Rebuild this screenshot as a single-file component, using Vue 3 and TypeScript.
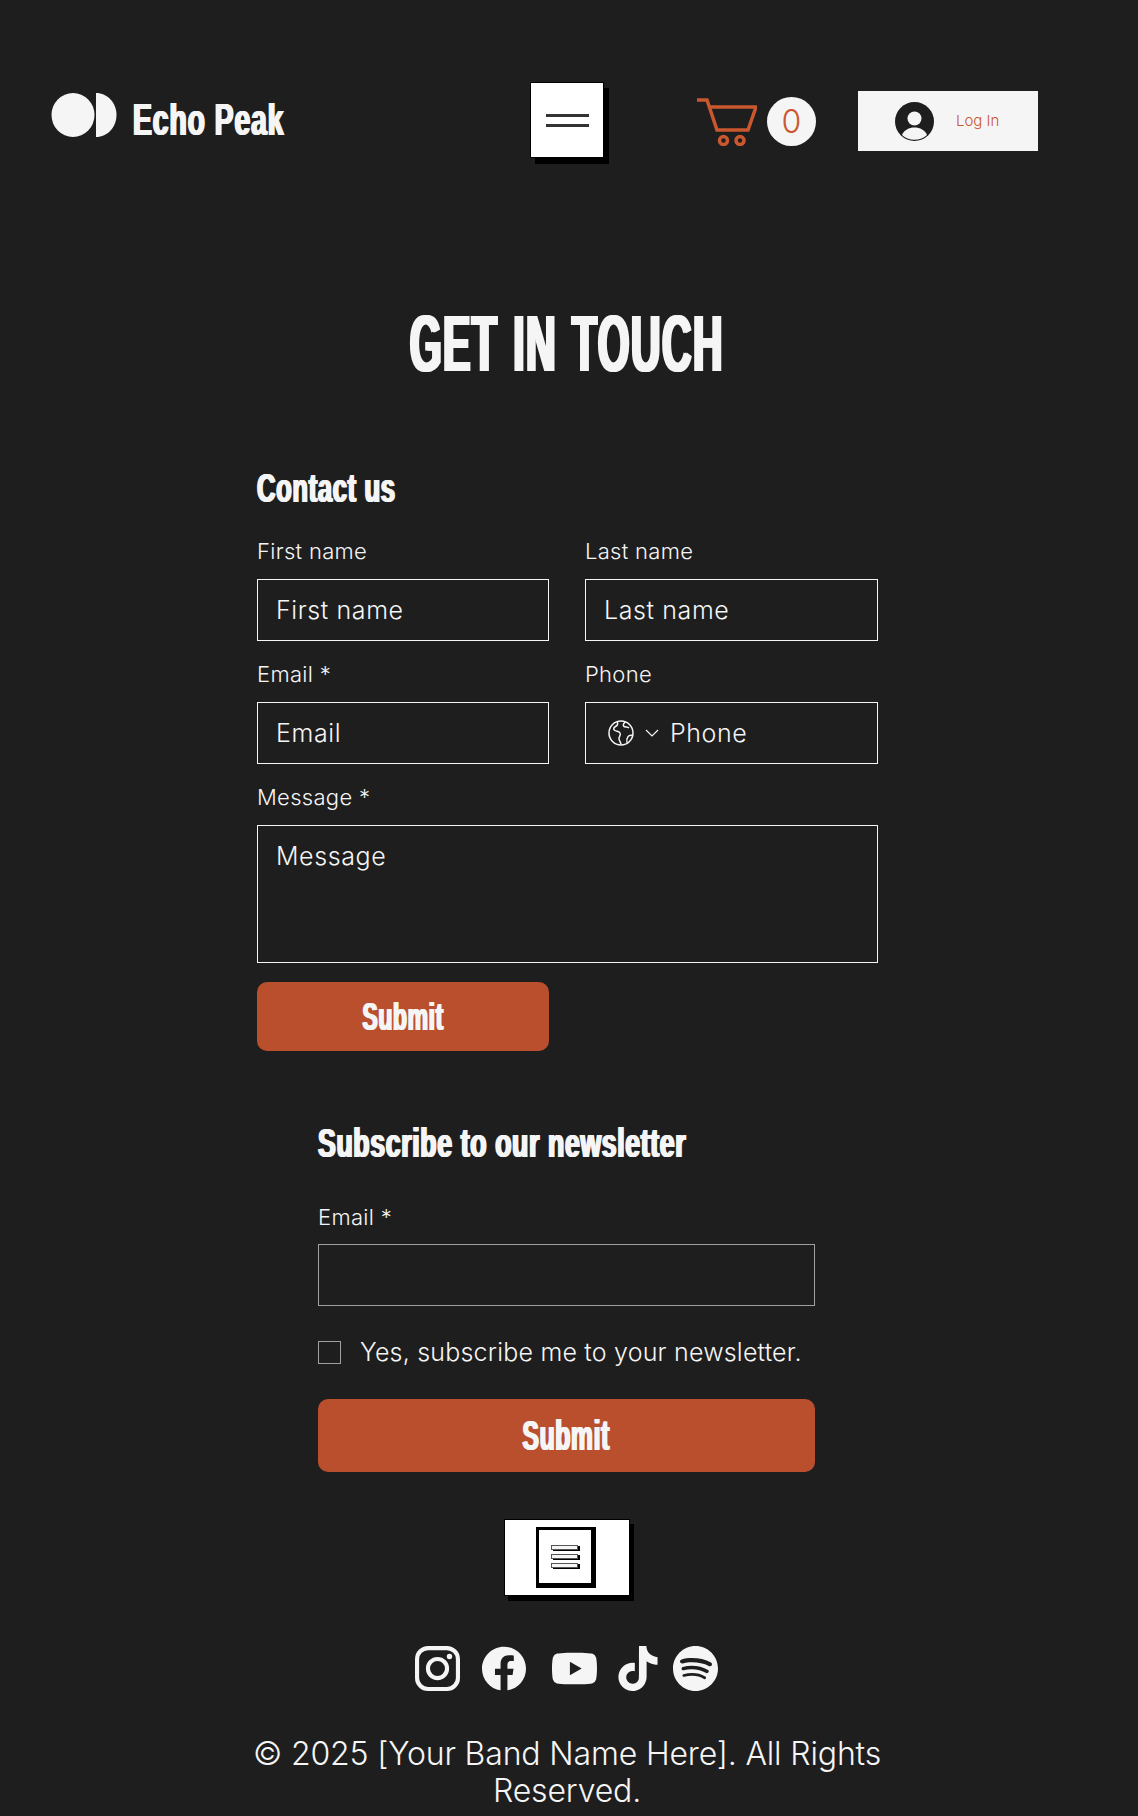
<template>
  <div class="page">
    <header class="site-header">
      <a class="logo" href="#">
        <svg class="logo__mark" viewBox="0 0 66 44" aria-hidden="true">
          <ellipse cx="22" cy="22" rx="21.5" ry="22" fill="#f5f5f5" />
          <path d="M45 0c11.500 0 20.500 9.800 20.500 22S56.500 44 45 44z" fill="#f5f5f5" />
        </svg>
        <span class="logo__name">Echo Peak</span>
      </a>
      <button class="menu-btn" type="button" aria-label="Menu">
        <span></span>
        <span></span>
      </button>
      <div class="cart">
        <svg class="cart__icon" viewBox="0 0 60 48" aria-hidden="true">
          <path d="M0 2h10l10 30h31l8-23H12" fill="none" stroke="#c9572f" stroke-width="3.500" />
          <circle cx="26.500" cy="42.500" r="4" fill="none" stroke="#c9572f" stroke-width="3.500" />
          <circle cx="43" cy="42.500" r="4" fill="none" stroke="#c9572f" stroke-width="3.500" />
        </svg>
        <span class="cart__count">0</span>
      </div>
      <button class="login" type="button">
        <svg class="login__avatar" viewBox="0 0 39 39" aria-hidden="true">
          <circle cx="19.500" cy="19.500" r="19.500" fill="#1e1e1e" />
          <circle cx="19.500" cy="16.500" r="7" fill="#f5f5f5" />
          <path d="M7 33c2-5 7-7.500 12.500-7.500S30 28 32 33c-3 3-7.500 4.700-12.500 4.700S10 36 7 33z" fill="#f5f5f5" />
        </svg>
        <span class="login__text">Log In</span>
      </button>
    </header>

    <h1 class="page-title"><span>GET IN TOUCH</span></h1>

    <form class="contact" @submit.prevent>
      <h2 class="heading heading--contact"><span>Contact us</span></h2>
      <div class="contact__grid">
        <label class="field">
          <span class="field__label">First name</span>
          <input class="field__input" type="text" placeholder="First name" />
        </label>
        <label class="field">
          <span class="field__label">Last name</span>
          <input class="field__input" type="text" placeholder="Last name" />
        </label>
        <label class="field">
          <span class="field__label">Email *</span>
          <input class="field__input" type="email" placeholder="Email" />
        </label>
        <label class="field">
          <span class="field__label">Phone</span>
          <div class="phone">
            <svg class="phone__globe" viewBox="0 0 26 26" aria-hidden="true">
              <circle cx="13" cy="13" r="12" />
              <path d="M9 1.700c1.500 2.300.3 3.800-1.500 4.800s-2.500 2.500-1 3.800 4.500.7 5.500 2.700-.5 3-1 5 1.500 3 2 6.500" />
              <path d="M17.500 1.900c-1.800 1.300-2.800 3-1.800 4.300s4 .5 5.300 1.800" />
              <path d="M24.700 15.500c-2-.5-3.700-.3-4.700 1.200s-1.800 3.300-1 6" />
            </svg>
            <svg class="phone__chevron" viewBox="0 0 14 8" aria-hidden="true">
              <path d="M1 1l6 6 6-6" />
            </svg>
            <input class="phone__input" type="tel" placeholder="Phone" />
          </div>
        </label>
        <label class="field field--wide">
          <span class="field__label">Message *</span>
          <textarea class="field__input field__input--area" placeholder="Message"></textarea>
        </label>
      </div>
      <button class="submit submit--contact" type="submit"><span>Submit</span></button>
    </form>

    <form class="newsletter" @submit.prevent>
      <h2 class="heading heading--newsletter"><span>Subscribe to our newsletter</span></h2>
      <label class="field newsletter__field">
        <span class="field__label">Email *</span>
        <input class="field__input field__input--muted" type="email" />
      </label>
      <label class="consent">
        <input class="consent__box" type="checkbox" />
        <span>Yes, subscribe me to your newsletter.</span>
      </label>
      <button class="submit submit--newsletter" type="submit"><span>Submit</span></button>
    </form>

    <footer class="site-footer">
      <button class="doc-btn" type="button" aria-label="Menu">
        <span class="doc-btn__icon">
          <i></i>
          <i></i>
          <i></i>
        </span>
      </button>
      <div class="socials">
        <a v-for="icon in socialIcons" :key="icon.name" href="#" :aria-label="icon.name" :class="`social social--${icon.name}`">
          <svg :viewBox="icon.viewBox ?? '0 0 24 24'"><path :d="icon.path" /></svg>
        </a>
      </div>
      <p class="copyright">© 2025 [Your Band Name Here]. All Rights Reserved.</p>
    </footer>
  </div>
</template>

<script setup lang="ts">
const socialIcons: { name: string; path: string; viewBox?: string }[] = [
  {
    name: 'instagram',
    path: 'M7 0h10a7 7 0 0 1 7 7v10a7 7 0 0 1-7 7H7a7 7 0 0 1-7-7V7a7 7 0 0 1 7-7zm0 2.200A4.800 4.800 0 0 0 2.200 7v10A4.800 4.800 0 0 0 7 21.800h10a4.800 4.800 0 0 0 4.800-4.800V7A4.800 4.800 0 0 0 17 2.200zM12 5.800a6.200 6.200 0 1 1 0 12.400 6.200 6.200 0 0 1 0-12.400zM12 8a4 4 0 1 0 0 8 4 4 0 0 0 0-8zm6.400-3.900a1.450 1.450 0 1 1 0 2.900 1.450 1.450 0 0 1 0-2.900z',
  },
  {
    name: 'facebook',
    path: 'M24 12.073c0-6.627-5.373-12-12-12s-12 5.373-12 12c0 5.990 4.388 10.954 10.125 11.854v-8.385H7.078v-3.470h3.047V9.430c0-3.007 1.792-4.669 4.533-4.669 1.312 0 2.686.235 2.686.235v2.953H15.830c-1.491 0-1.956.925-1.956 1.874v2.250h3.328l-.532 3.470h-2.796v8.385C19.612 23.027 24 18.062 24 12.073z',
  },
  {
    name: 'youtube',
    path: 'M23.498 6.186a3.016 3.016 0 0 0-2.122-2.136C19.505 3.545 12 3.545 12 3.545s-7.505 0-9.377.505A3.017 3.017 0 0 0 .502 6.186C0 8.070 0 12 0 12s0 3.930.502 5.814a3.016 3.016 0 0 0 2.122 2.136c1.871.505 9.376.505 9.376.505s7.505 0 9.377-.505a3.015 3.015 0 0 0 2.122-2.136C24 15.930 24 12 24 12s0-3.930-.502-5.814zM9.545 15.568V8.432L15.818 12l-6.273 3.568z',
  },
  {
    name: 'tiktok',
    viewBox: '1.600 0 20.800 24',
    path: 'M12.525.020c1.310-.020 2.610-.010 3.910-.020.080 1.530.630 3.090 1.750 4.170 1.120 1.110 2.700 1.620 4.240 1.790v4.030c-1.440-.050-2.890-.350-4.200-.970-.570-.260-1.100-.590-1.620-.930-.010 2.920.010 5.840-.020 8.750-.080 1.400-.540 2.790-1.350 3.940-1.310 1.920-3.580 3.170-5.910 3.210-1.430.080-2.860-.310-4.080-1.030-2.020-1.190-3.440-3.370-3.650-5.710-.020-.500-.030-1-.010-1.490.180-1.900 1.120-3.720 2.580-4.960 1.660-1.440 3.980-2.130 6.150-1.720.020 1.480-.040 2.960-.040 4.440-.990-.320-2.150-.230-3.020.370-.630.410-1.110 1.040-1.360 1.750-.210.510-.150 1.070-.140 1.610.240 1.640 1.820 3.020 3.500 2.870 1.120-.010 2.190-.660 2.770-1.610.190-.330.400-.670.410-1.060.100-1.790.060-3.570.070-5.360.010-4.030-.010-8.050.020-12.070z',
  },
  {
    name: 'spotify',
    path: 'M12 0C5.400 0 0 5.400 0 12s5.400 12 12 12 12-5.400 12-12S18.660 0 12 0zm5.521 17.340c-.240.359-.660.480-1.021.240-2.820-1.740-6.360-2.101-10.561-1.141-.418.122-.779-.179-.899-.539-.120-.421.180-.780.540-.900 4.560-1.021 8.520-.600 11.640 1.320.420.180.479.659.301 1.020zm1.440-3.300c-.301.420-.841.600-1.262.300-3.239-1.980-8.159-2.580-11.939-1.380-.479.120-1.020-.120-1.140-.600-.120-.480.120-1.021.600-1.141C9.600 9.900 15 10.561 18.720 12.840c.361.181.540.780.241 1.200zm.120-3.360C15.240 8.400 8.820 8.160 5.160 9.301c-.600.179-1.200-.181-1.380-.721-.180-.601.180-1.200.720-1.381 4.260-1.260 11.280-1.020 15.721 1.621.539.300.719 1.020.419 1.560-.299.421-1.020.599-1.559.300z',
  },
]
</script>

<style>
html,
body {
  margin: 0;
  background: #1e1e1e;
}
</style>

<style scoped>
.page {
  width: 1138px;
  height: 1816px;
  overflow: hidden;
  background: #1e1e1e;
  color: #f5f5f5;
  font-family: Inter, 'Open Sans', sans-serif;
  font-weight: 300;
}

.site-header {
  display: flex;
  align-items: center;
  padding: 82px 0 0 51px;
}

.logo {
  display: flex;
  align-items: center;
  width: 479px;
  color: #f5f5f5;
  text-decoration: none;
}

.logo__mark {
  width: 66px;
  height: 44px;
  margin-top: -11px;
}

.logo__name {
  margin-left: 16px;
  font-family: 'Liberation Sans', sans-serif;
  font-size: 45px;
  font-weight: 700;
  line-height: 50px;
  letter-spacing: 1.500px;
  text-shadow: 1.500px 0 #f5f5f5, -1.500px 0 #f5f5f5;
  transform: scaleX(0.628);
  transform-origin: left center;
  white-space: nowrap;
}

.menu-btn {
  display: flex;
  flex-direction: column;
  align-items: center;
  justify-content: center;
  gap: 7px;
  width: 74px;
  height: 76px;
  padding: 0;
  border: 1px solid #000;
  background: #fff;
  box-shadow: 5px 6px 0 #000;
}

.menu-btn span {
  width: 43px;
  height: 3px;
  background: #333;
}

.cart {
  display: flex;
  align-items: center;
  gap: 10px;
  margin-left: 93px;
  margin-top: 3px;
}

.cart__icon {
  width: 60px;
  height: 48px;
}

.cart__count {
  display: flex;
  align-items: center;
  justify-content: center;
  width: 49px;
  height: 49px;
  border-radius: 50%;
  background: #f5f5f5;
  color: #c9572f;
  font-size: 32px;
  font-weight: 300;
}

.login {
  display: flex;
  align-items: center;
  gap: 22px;
  width: 180px;
  height: 60px;
  margin-left: 42px;
  margin-top: 2px;
  padding: 0 0 0 37px;
  border: 0;
  background: #f5f5f5;
  color: #c9572f;
  font-family: inherit;
  font-size: 15px;
  font-weight: 300;
}

.login__avatar {
  width: 39px;
  height: 39px;
}

.login__text {
  padding-bottom: 2px;
}

.page-title {
  width: 1134px;
  height: 90px;
  margin: 141px 0 0;
  text-align: center;
  font-family: 'Liberation Sans', sans-serif;
  font-size: 80px;
  font-weight: 700;
  line-height: 90px;
  letter-spacing: 3px;
  word-spacing: 4px;
  color: #f5f5f5;
  text-shadow: 3px 0 #f5f5f5, -3px 0 #f5f5f5;
}

.page-title span {
  display: inline-block;
  transform: scaleX(0.51);
  white-space: nowrap;
}

.heading {
  height: 40px;
  margin: 0;
  font-family: 'Liberation Sans', sans-serif;
  font-size: 40px;
  font-weight: 700;
  line-height: 40px;
  letter-spacing: 1px;
  text-shadow: 1.500px 0 #f5f5f5, -1.500px 0 #f5f5f5;
}

.heading span {
  display: inline-block;
  transform-origin: left center;
  white-space: nowrap;
}

.heading--contact span {
  transform: scaleX(0.64);
}

.heading--newsletter span {
  transform: scaleX(0.665);
}

.contact {
  width: 621px;
  margin: 79px 0 0 257px;
}

.contact__grid {
  display: grid;
  grid-template-columns: 292px 293px;
  column-gap: 36px;
  row-gap: 22px;
  margin-top: 32px;
}

.contact__grid .field__label {
  padding-bottom: 2px;
  line-height: 22px;
}

.field {
  display: flex;
  flex-direction: column;
  gap: 15px;
}

.field--wide {
  grid-column: 1 / -1;
}

.field__label {
  font-size: 22px;
  line-height: 24px;
  letter-spacing: 0.3px;
}

.field__input {
  box-sizing: border-box;
  width: 100%;
  height: 62px;
  padding: 0 18px;
  border: 1px solid #f5f5f5;
  border-radius: 0;
  outline: 0;
  background: transparent;
  color: #f5f5f5;
  font-family: inherit;
  font-size: 25px;
  font-weight: 300;
  letter-spacing: 0.6px;
}

.field__input--area {
  display: block;
  height: 138px;
  padding-top: 15px;
  resize: none;
}

.field__input--muted {
  border-color: #a0a0a0;
}

.field__input::placeholder,
.phone__input::placeholder {
  color: #f5f5f5;
  opacity: 1;
}

.phone {
  display: flex;
  align-items: center;
  box-sizing: border-box;
  height: 62px;
  padding-left: 22px;
  border: 1px solid #f5f5f5;
}

.phone__globe {
  flex: none;
  width: 26px;
  height: 26px;
  fill: none;
  stroke: #f5f5f5;
  stroke-width: 1.500;
}

.phone__chevron {
  flex: none;
  width: 14px;
  height: 8px;
  margin-left: 11px;
  fill: none;
  stroke: #f5f5f5;
  stroke-width: 1.200;
}

.phone__input {
  flex: 1;
  min-width: 0;
  margin-left: 11px;
  padding: 0;
  border: 0;
  outline: 0;
  background: transparent;
  color: #f5f5f5;
  font-family: inherit;
  font-size: 25px;
  font-weight: 300;
  letter-spacing: 0.6px;
}

.submit {
  display: flex;
  align-items: center;
  justify-content: center;
  border: 0;
  background: #b94f2c;
  color: #f5f5f5;
  font-family: 'Liberation Sans', sans-serif;
  font-weight: 700;
  letter-spacing: 1px;
  text-shadow: 1.500px 0 #f5f5f5, -1.500px 0 #f5f5f5;
}

.submit span {
  display: inline-block;
  transform: scaleX(0.59);
}

.submit--contact {
  width: 292px;
  height: 69px;
  margin-top: 19px;
  border-radius: 10px;
  font-size: 39px;
}

.newsletter {
  width: 497px;
  margin: 72px 0 0 318px;
}

.newsletter__field {
  margin-top: 42px;
}

.consent {
  display: flex;
  align-items: center;
  gap: 19px;
  margin-top: 35px;
  font-size: 25px;
  line-height: 23px;
  letter-spacing: 0.2px;
  white-space: nowrap;
}

.consent__box {
  flex: none;
  box-sizing: border-box;
  width: 23px;
  height: 23px;
  margin: 0;
  border: 1px solid #a0a0a0;
  appearance: none;
  background: transparent;
}

.submit--newsletter {
  width: 497px;
  height: 73px;
  margin-top: 35px;
  border-radius: 10px;
  font-size: 42px;
}

.site-footer {
  display: flex;
  flex-direction: column;
  align-items: center;
  width: 1134px;
  margin-top: 47px;
}

.doc-btn {
  display: flex;
  align-items: center;
  justify-content: center;
  width: 126px;
  height: 77px;
  padding: 0 3px 0 0;
  border: 1px solid #000;
  background: #fff;
  box-shadow: 4px 5px 0 #000;
}

.doc-btn__icon {
  display: flex;
  flex-direction: column;
  align-items: center;
  justify-content: center;
  gap: 4px;
  box-sizing: border-box;
  width: 60px;
  height: 61px;
  border: 3px solid #000;
  border-right-width: 5px;
  border-bottom-width: 5px;
}

.doc-btn__icon i {
  display: block;
  box-sizing: border-box;
  width: 27px;
  height: 5px;
  border: 1px solid #555;
  background: #f5f5f5;
  box-shadow: 2px 1px 0 #000;
}

.socials {
  display: flex;
  align-items: center;
  width: 304px;
  height: 45px;
  margin-top: 50px;
}

.social {
  display: block;
  width: 45px;
  height: 45px;
}

.social svg {
  display: block;
  width: 100%;
  height: 100%;
  fill: #f5f5f5;
}

.social--facebook {
  margin-left: 22px;
  width: 44px;
}

.social--youtube {
  margin-left: 26px;
}

.social--tiktok {
  margin-left: 21px;
  width: 40px;
}

.social--spotify {
  margin-left: 15px;
}

.copyright {
  width: 640px;
  margin: 44px 0 0;
  text-align: center;
  font-size: 32px;
  font-weight: 300;
  line-height: 37px;
  letter-spacing: -0.15px;
}
</style>
